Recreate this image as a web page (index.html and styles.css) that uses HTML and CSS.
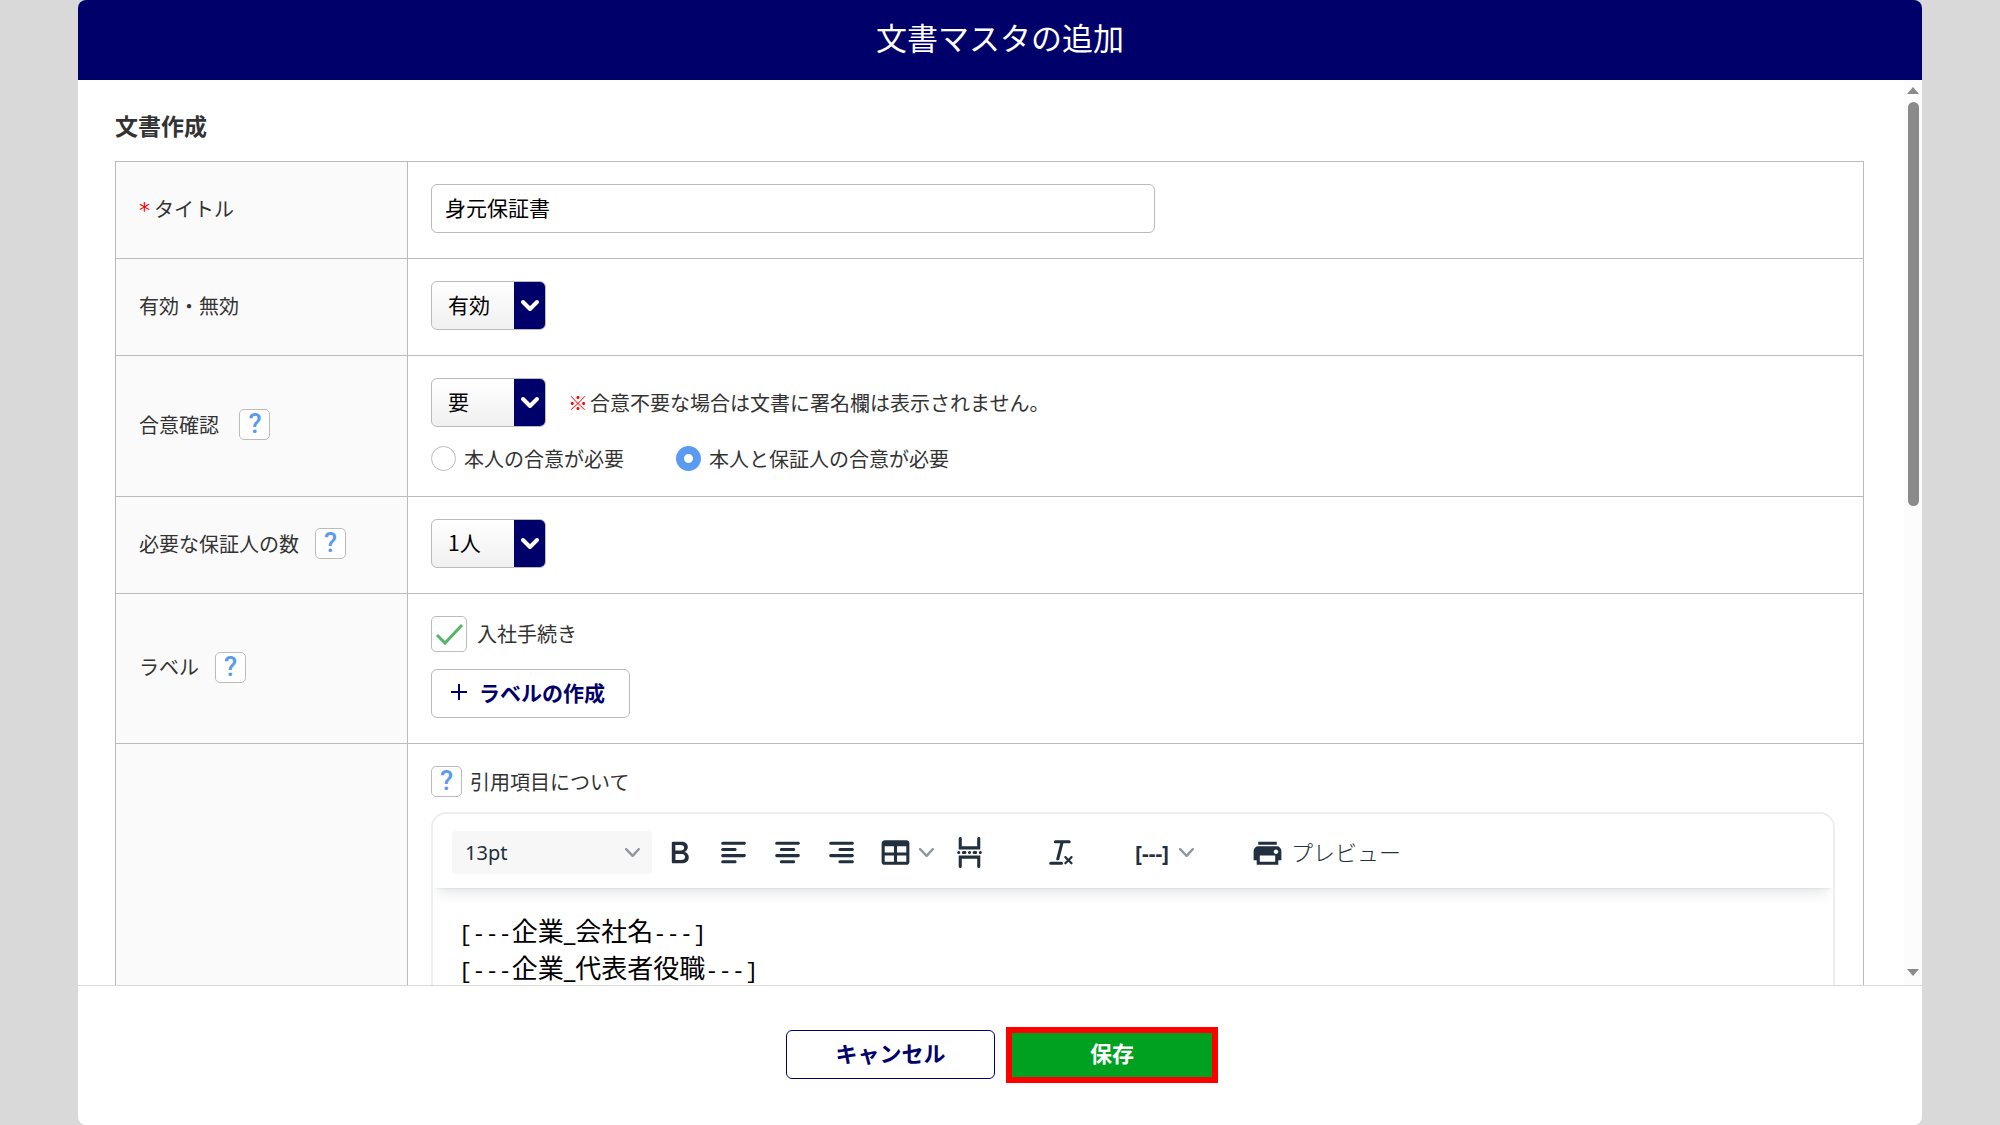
FILE: index.html
```html
<!DOCTYPE html>
<html lang="ja">
  <head>
    <meta charset="UTF-8" />
    <meta name="viewport" content="width=device-width, initial-scale=1.0" />
    <title>文書マスタの追加</title>
    <link rel="stylesheet" href="styles.css">
  </head>
  <body>
    <form class="modal">
      <header class="modal-header">
        <h1>文書マスタの追加</h1>
      </header>

      <div class="modal-body">
        <div class="content">
          <h2>文書作成</h2>
          <table class="form-table">
            <tr>
              <th scope="row">
                <label for="doc-title"><span class="required">*</span>タイトル</label>
              </th>
              <td>
                <input type="text" class="text-input" id="doc-title" value="身元保証書" />
              </td>
            </tr>
            <tr>
              <th scope="row"><label for="status">有効・無効</label></th>
              <td>
                <div class="select-box">
                  <select id="status">
                    <option>有効</option>
                    <option>無効</option>
                  </select>
                  <svg viewBox="0 0 31 47"><path d="M9 20l7 7 7-7" /></svg>
                </div>
              </td>
            </tr>
            <tr>
              <th scope="row">
                <div class="label-row">
                  <label for="agreement">合意確認&nbsp;</label>
                  <button type="button" class="help-btn">?</button>
                </div>
              </th>
              <td>
                <div class="agreement-row">
                  <div class="select-box">
                    <select id="agreement">
                      <option>要</option>
                      <option>不要</option>
                    </select>
                    <svg viewBox="0 0 31 47"><path d="M9 20l7 7 7-7" /></svg>
                  </div>
                  <p><span class="notice">※</span>合意不要な場合は文書に署名欄は表示されません。</p>
                </div>
                <div class="radio-row">
                  <label><input type="radio" name="signer" />本人の合意が必要</label>
                  <label><input type="radio" name="signer" checked />本人と保証人の合意が必要</label>
                </div>
              </td>
            </tr>
            <tr>
              <th scope="row">
                <div class="label-row">
                  <label for="guarantors">必要な保証人の数</label>
                  <button type="button" class="help-btn">?</button>
                </div>
              </th>
              <td>
                <div class="select-box">
                  <select id="guarantors">
                    <option>1人</option>
                    <option>2人</option>
                  </select>
                  <svg viewBox="0 0 31 47"><path d="M9 20l7 7 7-7" /></svg>
                </div>
              </td>
            </tr>
            <tr>
              <th scope="row">
                <div class="label-row">
                  <span>ラベル</span>
                  <button type="button" class="help-btn">?</button>
                </div>
              </th>
              <td>
                <label class="check-label">
                  <span class="check-box">
                    <input type="checkbox" checked />
                    <svg viewBox="0 0 36 36"><path d="M6 19l8 8L31 9" /></svg>
                  </span>
                  入社手続き
                </label>
                <button type="button" class="add-btn">
                  <svg viewBox="0 0 18 18"><path d="M9 1v16M1 9h16" /></svg>
                  ラベルの作成
                </button>
              </td>
            </tr>
            <tr>
              <th scope="row"></th>
              <td>
                <div class="quote-row">
                  <button type="button" class="help-btn">?</button>
                  <span>引用項目について</span>
                </div>

                <div class="editor">
                  <div class="toolbar">
                    <div class="toolbar-group">
                      <div class="size-box">
                        <select aria-label="フォントサイズ">
                          <option>13pt</option>
                        </select>
                        <svg class="chevron" viewBox="0 0 10 10"><path d="M8.7 2.2c.3-.3.8-.3 1 0 .4.4.4.9 0 1.2L5.7 7.8c-.3.3-.9.3-1.2 0L.2 3.4a.8.8 0 0 1 0-1.2c.3-.3.8-.3 1.1 0L5 6l3.7-3.8z" /></svg>
                      </div>
                      <button type="button" aria-label="太字">
                        <svg class="icon" viewBox="0 0 24 24"><path d="M7.8 19c-.3 0-.5 0-.6-.2l-.2-.5V5.7c0-.2 0-.4.2-.5l.6-.2h5c1.5 0 2.7.3 3.5 1 .7.6 1.1 1.4 1.1 2.5a3 3 0 0 1-.6 1.9c-.4.6-1 1-1.6 1.2.4.1.9.3 1.3.6s.8.7 1 1.2c.4.4.5 1 .5 1.6 0 1.3-.4 2.3-1.3 3-.8.7-2.1 1-3.8 1H7.8zm5-8.3c.6 0 1.2-.1 1.6-.5.4-.3.6-.7.6-1.3 0-1.1-.8-1.7-2.3-1.7H9.3v3.5h3.4zm.5 6c.7 0 1.3-.1 1.7-.4.4-.4.6-.9.6-1.5s-.2-1-.7-1.4c-.4-.3-1-.4-2-.4H9.4v3.8h4z" /></svg>
                      </button>
                      <button type="button" aria-label="左揃え">
                        <svg class="icon" viewBox="0 0 24 24"><path d="M5 5h14c.6 0 1 .4 1 1s-.4 1-1 1H5a1 1 0 1 1 0-2zm0 4h8c.6 0 1 .4 1 1s-.4 1-1 1H5a1 1 0 1 1 0-2zm0 8h8c.6 0 1 .4 1 1s-.4 1-1 1H5a1 1 0 0 1 0-2zm0-4h14c.6 0 1 .4 1 1s-.4 1-1 1H5a1 1 0 0 1 0-2z" /></svg>
                      </button>
                      <button type="button" aria-label="中央揃え">
                        <svg class="icon" viewBox="0 0 24 24"><path d="M5 5h14c.6 0 1 .4 1 1s-.4 1-1 1H5a1 1 0 1 1 0-2zm3 4h8c.6 0 1 .4 1 1s-.4 1-1 1H8a1 1 0 1 1 0-2zm0 8h8c.6 0 1 .4 1 1s-.4 1-1 1H8a1 1 0 0 1 0-2zm-3-4h14c.6 0 1 .4 1 1s-.4 1-1 1H5a1 1 0 0 1 0-2z" /></svg>
                      </button>
                      <button type="button" aria-label="右揃え">
                        <svg class="icon" viewBox="0 0 24 24"><path d="M5 5h14c.6 0 1 .4 1 1s-.4 1-1 1H5a1 1 0 1 1 0-2zm6 4h8c.6 0 1 .4 1 1s-.4 1-1 1h-8a1 1 0 0 1 0-2zm0 8h8c.6 0 1 .4 1 1s-.4 1-1 1h-8a1 1 0 0 1 0-2zm-6-4h14c.6 0 1 .4 1 1s-.4 1-1 1H5a1 1 0 0 1 0-2z" /></svg>
                      </button>
                      <button type="button" aria-label="表">
                        <svg class="icon" viewBox="0 0 24 24"><path d="M19 4a2 2 0 0 1 2 2v12a2 2 0 0 1-2 2H5a2 2 0 0 1-2-2V6c0-1.1.9-2 2-2h14zM5 14v4h6v-4H5zm14 0h-6v4h6v-4zm0-6h-6v4h6V8zM5 12h6V8H5v4z" /></svg>
                        <svg class="chevron" viewBox="0 0 10 10"><path d="M8.7 2.2c.3-.3.8-.3 1 0 .4.4.4.9 0 1.2L5.7 7.8c-.3.3-.9.3-1.2 0L.2 3.4a.8.8 0 0 1 0-1.2c.3-.3.8-.3 1.1 0L5 6l3.7-3.8z" /></svg>
                      </button>
                      <button type="button" aria-label="改ページ">
                        <svg class="icon" viewBox="0 0 24 24"><path d="M5 11c.6 0 1 .4 1 1s-.4 1-1 1a1 1 0 0 1 0-2zm3 0h1c.6 0 1 .4 1 1s-.4 1-1 1H8a1 1 0 0 1 0-2zm4 0c.6 0 1 .4 1 1s-.4 1-1 1a1 1 0 0 1 0-2zm3 0h1c.6 0 1 .4 1 1s-.4 1-1 1h-1a1 1 0 0 1 0-2zm4 0c.6 0 1 .4 1 1s-.4 1-1 1a1 1 0 0 1 0-2zM7 3v5h10V3c0-.6.4-1 1-1s1 .4 1 1v7H5V3c0-.6.4-1 1-1s1 .4 1 1zM6 22a1 1 0 0 1-1-1v-7h14v7c0 .6-.4 1-1 1a1 1 0 0 1-1-1v-5H7v5c0 .6-.4 1-1 1z" /></svg>
                      </button>
                    </div>
                    <div class="toolbar-group">
                      <button type="button" aria-label="書式をクリア">
                        <svg class="icon" viewBox="0 0 24 24"><path d="M13.2 6a1 1 0 0 1 0 .2l-2.6 10a1 1 0 0 1-1 .8h-.2a.8.8 0 0 1-.8-1l2.6-10H8a1 1 0 1 1 0-2h9a1 1 0 0 1 0 2h-3.8zM5 18h7a1 1 0 0 1 0 2H5a1 1 0 0 1 0-2zm13 1.5L16.5 18 15 19.5a.7.7 0 0 1-1-1l1.5-1.5-1.5-1.5a.7.7 0 0 1 1-1l1.5 1.5 1.5-1.5a.7.7 0 0 1 1 1L17.5 17l1.5 1.5a.7.7 0 0 1-1 1z" /></svg>
                      </button>
                    </div>
                    <div class="toolbar-group">
                      <button type="button" class="tag-btn">
                        [---]
                        <svg class="chevron" viewBox="0 0 10 10"><path d="M8.7 2.2c.3-.3.8-.3 1 0 .4.4.4.9 0 1.2L5.7 7.8c-.3.3-.9.3-1.2 0L.2 3.4a.8.8 0 0 1 0-1.2c.3-.3.8-.3 1.1 0L5 6l3.7-3.8z" /></svg>
                      </button>
                    </div>
                    <div class="toolbar-group">
                      <button type="button" class="preview-btn">
                        <svg class="icon" viewBox="0 0 24 24"><path d="M18 8H6a3 3 0 0 0-3 3v6h2v3h14v-3h2v-6a3 3 0 0 0-3-3zm-1 10H7v-4h10v4zm.5-5c-.8 0-1.5-.7-1.5-1.5s.7-1.5 1.5-1.5 1.5.7 1.5 1.5-.7 1.5-1.5 1.5zm.5-8H6v2h12V5z" /></svg>
                        <span>プレビュー</span>
                      </button>
                    </div>
                  </div>
                  <div class="editor-text">
                    <p><span class="tag">[---</span>企業_会社名<span class="tag">---]</span></p>
                    <p><span class="tag">[---</span>企業_代表者役職<span class="tag">---]</span></p>
                  </div>
                </div>
              </td>
            </tr>
          </table>
        </div>

        <div class="scrollbar" aria-hidden="true">
          <svg viewBox="0 0 12 7"><path d="M6 0l6 7H0z" /></svg>
          <div class="track"><div class="thumb" style="height: 47%"></div></div>
          <svg viewBox="0 0 12 7"><path d="M6 7l6-7H0z" /></svg>
        </div>
      </div>

      <footer class="modal-footer">
        <button type="button" class="cancel-btn">キャンセル</button>
        <button type="submit" class="save-btn">保存</button>
      </footer>
    </form>
  </body>
</html>
```
FILE: styles.css
```css
* {
  box-sizing: border-box;
}

body {
  margin: 0;
  font-family: "Noto Sans CJK JP", sans-serif;
  font-size: 20px;
  line-height: 30px;
  color: #333;
  background-color: #d9d9d9;
}

h1,
h2,
p {
  margin: 0;
}

button,
input,
select {
  margin: 0;
  font-family: inherit;
}

button {
  padding: 0;
  background: none;
  border: none;
  cursor: pointer;
}

.modal {
  display: flex;
  flex-direction: column;
  height: 100vh;
  margin: 0 78px;
  background-color: white;
  border-radius: 8px;
  overflow: hidden;
}

.modal-header {
  padding: 17px 0 23px;
  text-align: center;
  color: white;
  background-color: #00006a;
}

.modal-header h1 {
  font-size: 31px;
  font-weight: normal;
  line-height: 40px;
}

.modal-body {
  display: flex;
  flex: 1;
  min-height: 0;
}

.content {
  flex: 1;
  padding: 30px 40px 0 37px;
  overflow: hidden;
}

.content h2 {
  margin-bottom: 21px;
  font-size: 23px;
  font-weight: bold;
}

/* form table */
.form-table {
  width: 100%;
  border-collapse: collapse;
}

.form-table th,
.form-table td {
  padding: 22px 23px 25px;
  border: 1px solid #bbb;
}

.form-table th {
  width: 292px;
  text-align: left;
  font-weight: normal;
  background-color: #fafafa;
}

.required {
  margin-right: 4px;
  font-family: "DejaVu Sans", sans-serif;
  font-size: 22px;
  line-height: 1;
  vertical-align: middle;
  color: red;
}

.label-row {
  display: flex;
  align-items: center;
  gap: 16px;
}

.help-btn {
  width: 31px;
  height: 31px;
  font-family: Roboto, sans-serif;
  font-size: 27px;
  font-weight: 500;
  line-height: 29px;
  color: #5a9af0;
  background-color: white;
  border: 1px solid #bbb;
  border-radius: 5px;
}

.text-input {
  display: block;
  width: 724px;
  max-width: 100%;
  height: 49px;
  padding: 0 13px 4px;
  font-size: 21px;
  color: black;
  border: 1px solid #bbb;
  border-radius: 6px;
}

.select-box {
  position: relative;
  width: 115px;
  height: 49px;
}

.select-box select {
  width: 100%;
  height: 100%;
  padding: 0 16px 4px;
  font-size: 21px;
  color: black;
  appearance: none;
  background: linear-gradient(white, #f0f0f0);
  border: 1px solid #bbb;
  border-radius: 6px;
}

.select-box svg {
  position: absolute;
  top: 1px;
  right: 1px;
  width: 31px;
  height: 47px;
  background-color: #00006a;
  border-radius: 0 5px 5px 0;
  fill: none;
  stroke: white;
  stroke-width: 4;
  stroke-linecap: round;
  stroke-linejoin: round;
  pointer-events: none;
}

.agreement-row {
  display: flex;
  align-items: center;
  gap: 22px;
  margin-bottom: 19px;
}

.notice {
  margin-right: 2px;
  font-weight: 900;
  color: red;
}

.radio-row {
  display: flex;
  gap: 52px;
}

.radio-row label {
  display: flex;
  align-items: center;
  gap: 8px;
  line-height: 25px;
}

.radio-row input {
  width: 25px;
  height: 25px;
  appearance: none;
  background-color: white;
  border: 1px solid #bbb;
  border-radius: 50%;
}

.radio-row input:checked {
  border: 8px solid #5a9af0;
}

.check-label {
  display: flex;
  align-items: center;
  gap: 10px;
  margin-bottom: 17px;
}

.check-box {
  position: relative;
  width: 36px;
  height: 36px;
}

.check-box input {
  display: block;
  width: 36px;
  height: 36px;
  appearance: none;
  background-color: white;
  border: 1px solid #bbb;
  border-radius: 5px;
}

.check-box svg {
  position: absolute;
  top: 0;
  left: 0;
  width: 36px;
  height: 36px;
  fill: none;
  stroke: #56b568;
  stroke-width: 3;
  pointer-events: none;
}

.check-box input:not(:checked) + svg {
  display: none;
}

.add-btn {
  display: flex;
  align-items: center;
  gap: 11px;
  height: 49px;
  padding: 0 24px 3px 18px;
  font-size: 21px;
  font-weight: bold;
  color: #00006a;
  background-color: white;
  border: 1px solid #bbb;
  border-radius: 6px;
}

.add-btn svg {
  width: 18px;
  height: 18px;
  stroke: #00006a;
  stroke-width: 2;
}

.quote-row {
  display: flex;
  align-items: center;
  gap: 8px;
  margin-bottom: 15px;
}

/* rich text editor */
.editor {
  margin-right: 5px;
  height: 600px;
  border: 2px solid #eee;
  border-radius: 15px;
  overflow: hidden;
}

.toolbar {
  display: flex;
  gap: 39px;
  padding: 17px 19px 14px;
  box-shadow: 0 3px 3px -3px rgba(34, 47, 62, 0.15), 0 12px 12px -6px rgba(34, 47, 62, 0.1);
}

.toolbar-group {
  display: flex;
  align-items: center;
  gap: 1px;
}

.toolbar button {
  display: flex;
  align-items: center;
  gap: 5px;
  height: 43px;
  padding: 0 8px;
  color: #222f3e;
}

.icon {
  width: 37px;
  height: 37px;
  fill: #222f3e;
  fill-rule: evenodd;
}

.chevron {
  width: 15px;
  height: 15px;
  fill: #8f979f;
}

.size-box {
  position: relative;
  width: 200px;
  height: 43px;
}

.size-box select {
  width: 100%;
  height: 100%;
  padding: 0 13px;
  font-family: "Noto Sans", sans-serif;
  font-size: 20px;
  color: #222f3e;
  appearance: none;
  background-color: #f7f7f7;
  border: none;
  border-radius: 4px;
}

.size-box .chevron {
  position: absolute;
  top: 14px;
  right: 12px;
  pointer-events: none;
}

.toolbar .tag-btn {
  gap: 10px;
  font-family: "Noto Sans", sans-serif;
  font-size: 21px;
  font-weight: bold;
}

.preview-btn span {
  padding-bottom: 4px;
  font-size: 22px;
  font-weight: 300;
}

.editor-text {
  padding: 25px 26px;
  font-family: "Noto Sans", "Noto Sans CJK JP", sans-serif;
  font-size: 26px;
  line-height: 37px;
  color: black;
}

.editor-text .tag {
  font-family: "Liberation Mono", monospace;
  font-size: 22px;
  line-height: 1;
}

/* drawn scrollbar */
.scrollbar {
  display: flex;
  flex-direction: column;
  align-items: center;
  gap: 8px;
  width: 18px;
  padding: 7px 0 9px;
  background-color: #fcfcfc;
}

.scrollbar svg {
  width: 12px;
  height: 7px;
  fill: #8a8a8a;
}

.track {
  flex: 1;
}

.thumb {
  width: 11px;
  background-color: #8a8a8a;
  border-radius: 6px;
}

.modal-footer {
  display: flex;
  justify-content: center;
  align-items: center;
  gap: 11px;
  height: 140px;
  padding: 0 0 2px 4px;
  border-top: 1px solid #d9d9d9;
}

.cancel-btn,
.save-btn {
  padding-bottom: 5px;
  font-size: 22px;
  font-weight: bold;
}

.cancel-btn {
  width: 209px;
  height: 49px;
  color: #00006a;
  border: 1px solid #00006a;
  border-radius: 6px;
}

.save-btn {
  width: 212px;
  height: 56px;
  color: white;
  background-color: #00a020;
  border: 6px solid red;
}
```
